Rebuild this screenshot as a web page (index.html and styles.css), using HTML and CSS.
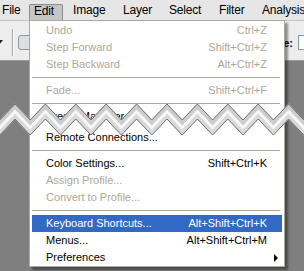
FILE: index.html
```html
<!DOCTYPE html>
<html>
<head>
  <title>Edit menu</title>
  <link rel="stylesheet" href="styles.css">
</head>
<body>
  <div class="app">
    <div class="menubar">
      <span>File</span>
      <span class="open">Edit</span>
      <span>Image</span>
      <span>Layer</span>
      <span>Select</span>
      <span>Filter</span>
      <span>Analysis</span>
    </div>

    <div class="toolbar">
      <span class="drop-arrow"></span>
      <span class="tool-sep"></span>
      <span class="tool-btn"></span>
      <div class="tool-right">
        <span class="tool-label">Style:</span>
        <span class="tool-input"></span>
      </div>
    </div>

    <div class="workspace"></div>

    <!-- Edit dropdown -->
    <div class="menu">
      <div class="item disabled"><span>Undo</span><span>Ctrl+Z</span></div>
      <div class="item disabled"><span>Step Forward</span><span>Shift+Ctrl+Z</span></div>
      <div class="item disabled"><span>Step Backward</span><span>Alt+Ctrl+Z</span></div>
      <div class="sep"></div>
      <div class="item disabled"><span>Fade...</span><span>Shift+Ctrl+F</span></div>
      <div class="sep"></div>
      <div class="cut">
        <div class="item"><span>Preset Manager...</span><span></span></div>
      </div>
      <div class="item"><span>Remote Connections...</span><span></span></div>
      <div class="sep"></div>
      <div class="item"><span>Color Settings...</span><span>Shift+Ctrl+K</span></div>
      <div class="item disabled"><span>Assign Profile...</span><span></span></div>
      <div class="item disabled"><span>Convert to Profile...</span><span></span></div>
      <div class="sep"></div>
      <div class="item active"><span>Keyboard Shortcuts...</span><span>Alt+Shift+Ctrl+K</span></div>
      <div class="item"><span>Menus...</span><span>Alt+Shift+Ctrl+M</span></div>
      <div class="item"><span>Preferences</span><span class="sub-arrow"></span></div>
    </div>

    <!-- torn edge across the screenshot -->
    <svg class="tear" width="304" height="46" viewBox="0 0 304 46">
      <polygon class="band" points="-15.4,8 -0.2,24 15,8 30.2,24 45.4,8 60.6,24 75.8,8 91,24 106.2,8 121.4,24 136.6,8 151.8,24 167,8 182.2,24 197.4,8 212.6,24 227.8,8 243,24 258.2,8 273.4,24 288.6,8 303.8,24 319,8 319,23 303.8,39 288.6,23 273.4,39 258.2,23 243,39 227.8,23 212.6,39 197.4,23 182.2,39 167,23 151.8,39 136.6,23 121.4,39 106.2,23 91,39 75.8,23 60.6,39 45.4,23 30.2,39 15,23 -0.2,39 -15.4,23"/>
      <polyline class="shade-top" transform="translate(0,2.5)" points="-15.4,8 -0.2,24 15,8 30.2,24 45.4,8 60.6,24 75.8,8 91,24 106.2,8 121.4,24 136.6,8 151.8,24 167,8 182.2,24 197.4,8 212.6,24 227.8,8 243,24 258.2,8 273.4,24 288.6,8 303.8,24 319,8"/>
      <polyline class="shade-bottom" transform="translate(0,12.5)" points="-15.4,8 -0.2,24 15,8 30.2,24 45.4,8 60.6,24 75.8,8 91,24 106.2,8 121.4,24 136.6,8 151.8,24 167,8 182.2,24 197.4,8 212.6,24 227.8,8 243,24 258.2,8 273.4,24 288.6,8 303.8,24 319,8"/>
      <polyline class="edge" points="-15.4,8 -0.2,24 15,8 30.2,24 45.4,8 60.6,24 75.8,8 91,24 106.2,8 121.4,24 136.6,8 151.8,24 167,8 182.2,24 197.4,8 212.6,24 227.8,8 243,24 258.2,8 273.4,24 288.6,8 303.8,24 319,8"/>
      <polyline class="edge" transform="translate(0,15)" points="-15.4,8 -0.2,24 15,8 30.2,24 45.4,8 60.6,24 75.8,8 91,24 106.2,8 121.4,24 136.6,8 151.8,24 167,8 182.2,24 197.4,8 212.6,24 227.8,8 243,24 258.2,8 273.4,24 288.6,8 303.8,24 319,8"/>
    </svg>
  </div>
</body>
</html>
```

FILE: styles.css
```css
body {
  margin: 0;
  font-family: 'Liberation Sans', Arial, sans-serif;
  font-size: 11px;
  color: #000;
  overflow: hidden;
}

.app {
  position: relative;
  width: 304px;
  height: 271px;
  display: flex;
  flex-direction: column;
  overflow: hidden;
  background: #7f7f7f;
}

.menubar {
  height: 20px;
  display: grid;
  grid-template-columns: 29px 40px 50px 46px 50px 43px 1fr;
  align-items: end;
  background: #e6e6e6;
  border-bottom: 1px solid #c4c4c4;
  font-size: 12px;
  letter-spacing: -0.2px;
}

.menubar span {
  padding: 0 0 3px 4px;
  line-height: 13px;
  white-space: nowrap;
}

.menubar span:first-child {
  padding-left: 2px;
}

.menubar .open {
  justify-self: start;
  width: 34px;
  box-sizing: border-box;
  height: 16px;
  background: #c6c6c6;
  border: 1px solid #8e8e8e;
  border-bottom: none;
  border-radius: 2px 2px 0 0;
  padding-left: 4px;
}

.toolbar {
  height: 40px;
  display: flex;
  align-items: center;
  padding-top: 4px;
  box-sizing: border-box;
  background: #ededed;
  border-bottom: 1px solid #9c9c9c;
}

.drop-arrow {
  margin-left: -5px;
  border-top: 5px solid #222;
  border-left: 4px solid transparent;
  border-right: 4px solid transparent;
}

.tool-sep {
  margin-left: 9px;
  width: 1px;
  height: 27px;
  background: #a6a6a6;
  border-right: 1px solid #fff;
}

.tool-btn {
  margin-left: 4px;
  width: 14px;
  height: 13px;
  border: 1px solid #8b96a6;
  border-radius: 3px;
  background: #dedede;
}

.tool-right {
  margin-left: auto;
  display: flex;
  align-items: center;
}

.tool-label {
  font-weight: bold;
}

.tool-input {
  margin-left: 5px;
  margin-right: -26px;
  width: 30px;
  height: 13px;
  background: #fff;
  border: 1px solid #7f9db9;
}

.workspace {
  flex: 1;
}

.menu {
  position: absolute;
  left: 29px;
  top: 20px;
  width: 256px;
  box-sizing: border-box;
  padding: 1px 2px 0;
  background: #fff;
  border: 1px solid #aca899;
  box-shadow: 3px 3px 2px rgba(0, 0, 0, 0.4);
}

.item {
  height: 17px;
  line-height: 17px;
  display: flex;
  justify-content: space-between;
  align-items: center;
  padding: 0 15px 0 14px;
  white-space: nowrap;
}

.item.disabled {
  color: #aca899;
}

.item.active {
  background: #316ac5;
  color: #fff;
}

.sep {
  height: 9px;
  position: relative;
}

.sep::before {
  content: "";
  position: absolute;
  left: 0;
  right: 2px;
  top: 4px;
  height: 1px;
  background: #aca899;
}

.cut {
  height: 21px;
}

.sub-arrow {
  margin-right: -11px;
  border-left: 4px solid #000;
  border-top: 4px solid transparent;
  border-bottom: 4px solid transparent;
}

.tear {
  position: absolute;
  left: 0;
  top: 96px;
}

.tear .band {
  fill: #f8f8f8;
}

.tear .shade-top {
  fill: none;
  stroke: #cdcdcd;
  stroke-width: 4;
}

.tear .shade-bottom {
  fill: none;
  stroke: #dadada;
  stroke-width: 4;
}

.tear .edge {
  fill: none;
  stroke: #707070;
  stroke-width: 1;
}
```
